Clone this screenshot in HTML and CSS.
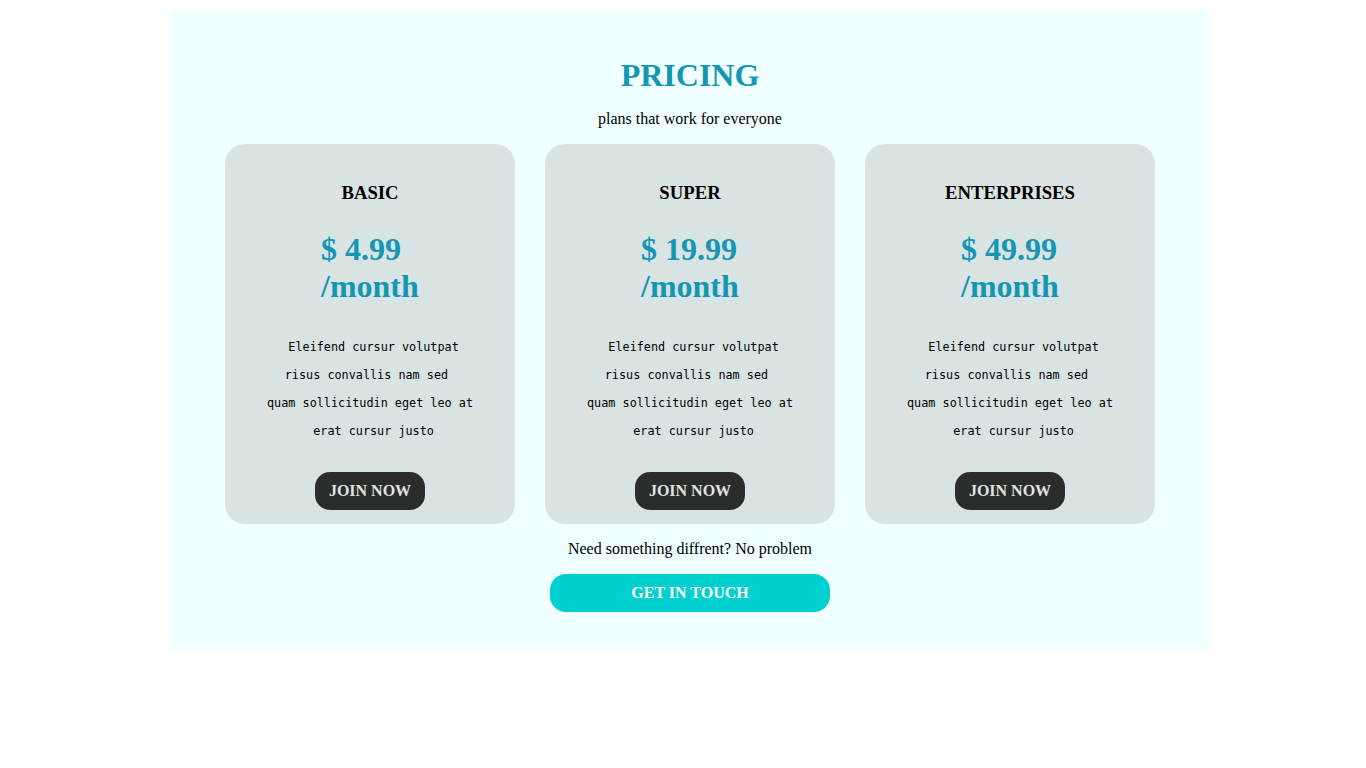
FILE: index.html
```html
<!DOCTYPE html>
<html lang="en">
<head>
<meta charset="utf-8">
<title>Pricing</title>
<link rel="stylesheet" href="styles.css">
</head>
<body>
<section class="pricing">
  <h1 class="pricing-title">PRICING</h1>
  <p class="pricing-sub">plans that work for everyone</p>
  <div class="plans">
    <div class="plan">
      <h3 class="plan-name">BASIC</h3>
      <h2 class="plan-price">$ 4.99 /month</h2>
      <p class="plan-desc">&nbsp;Eleifend cursur volutpat<br>risus convallis nam sed&nbsp;<br>quam sollicitudin eget leo at<br>&nbsp;erat cursur justo</p>
      <button class="join">JOIN NOW</button>
    </div>
    <div class="plan">
      <h3 class="plan-name">SUPER</h3>
      <h2 class="plan-price">$ 19.99 /month</h2>
      <p class="plan-desc">&nbsp;Eleifend cursur volutpat<br>risus convallis nam sed&nbsp;<br>quam sollicitudin eget leo at<br>&nbsp;erat cursur justo</p>
      <button class="join">JOIN NOW</button>
    </div>
    <div class="plan">
      <h3 class="plan-name">ENTERPRISES</h3>
      <h2 class="plan-price">$ 49.99 /month</h2>
      <p class="plan-desc">&nbsp;Eleifend cursur volutpat<br>risus convallis nam sed&nbsp;<br>quam sollicitudin eget leo at<br>&nbsp;erat cursur justo</p>
      <button class="join">JOIN NOW</button>
    </div>
  </div>
  <p class="different">Need something diffrent? No problem</p>
  <button class="touch">GET IN TOUCH</button>
</section>
</body>
</html>
```
FILE: styles.css
```css
html, body {
  margin: 0;
  padding: 0;
  background: #ffffff;
  font-family: "Liberation Serif", "Times New Roman", serif;
  color: #000;
}

.pricing {
  width: 1040px;
  margin: 10px 0 0 170px;
  padding: 47px 0 38px;
  box-sizing: border-box;
  background: #f0ffff;
  display: flex;
  flex-direction: column;
  align-items: center;
}

.pricing-title {
  margin: 0;
  font-size: 32px;
  line-height: 37px;
  font-weight: bold;
  color: #1497b3;
}

.pricing-sub {
  margin: 16px 0 0;
  font-size: 16px;
  line-height: 18px;
}

.plans {
  margin-top: 16px;
  display: flex;
  gap: 30px;
}

.plan {
  width: 290px;
  height: 380px;
  box-sizing: border-box;
  padding-top: 38px;
  background: #dae3e3;
  border-radius: 20px;
  display: flex;
  flex-direction: column;
  align-items: center;
}

.plan-name {
  margin: 0;
  font-size: 18.72px;
  line-height: 22px;
  font-weight: bold;
}

.plan-price {
  margin: 27px 0 0;
  width: 98px;
  font-size: 32px;
  line-height: 37px;
  font-weight: bold;
  color: #1497b3;
  text-align: left;
}

.plan-desc {
  margin: 28px 0 0;
  font-family: "DejaVu Sans Mono", monospace;
  font-size: 11.8px;
  line-height: 28px;
  text-align: center;
  white-space: nowrap;
}

.join {
  margin-top: 27px;
  width: 110px;
  height: 38px;
  border: none;
  border-radius: 15px;
  background: #2b2d2d;
  color: #e2e2e2;
  font-family: "Liberation Serif", "Times New Roman", serif;
  font-size: 16px;
  font-weight: bold;
  padding: 0;
}

.different {
  margin: 16px 0 0;
  font-size: 16px;
  line-height: 18px;
}

.touch {
  margin-top: 16px;
  width: 280px;
  height: 38px;
  border: none;
  border-radius: 16px;
  background: #00d0d0;
  color: #ffffff;
  font-family: "Liberation Serif", "Times New Roman", serif;
  font-size: 16px;
  font-weight: bold;
  padding: 0;
}
```
